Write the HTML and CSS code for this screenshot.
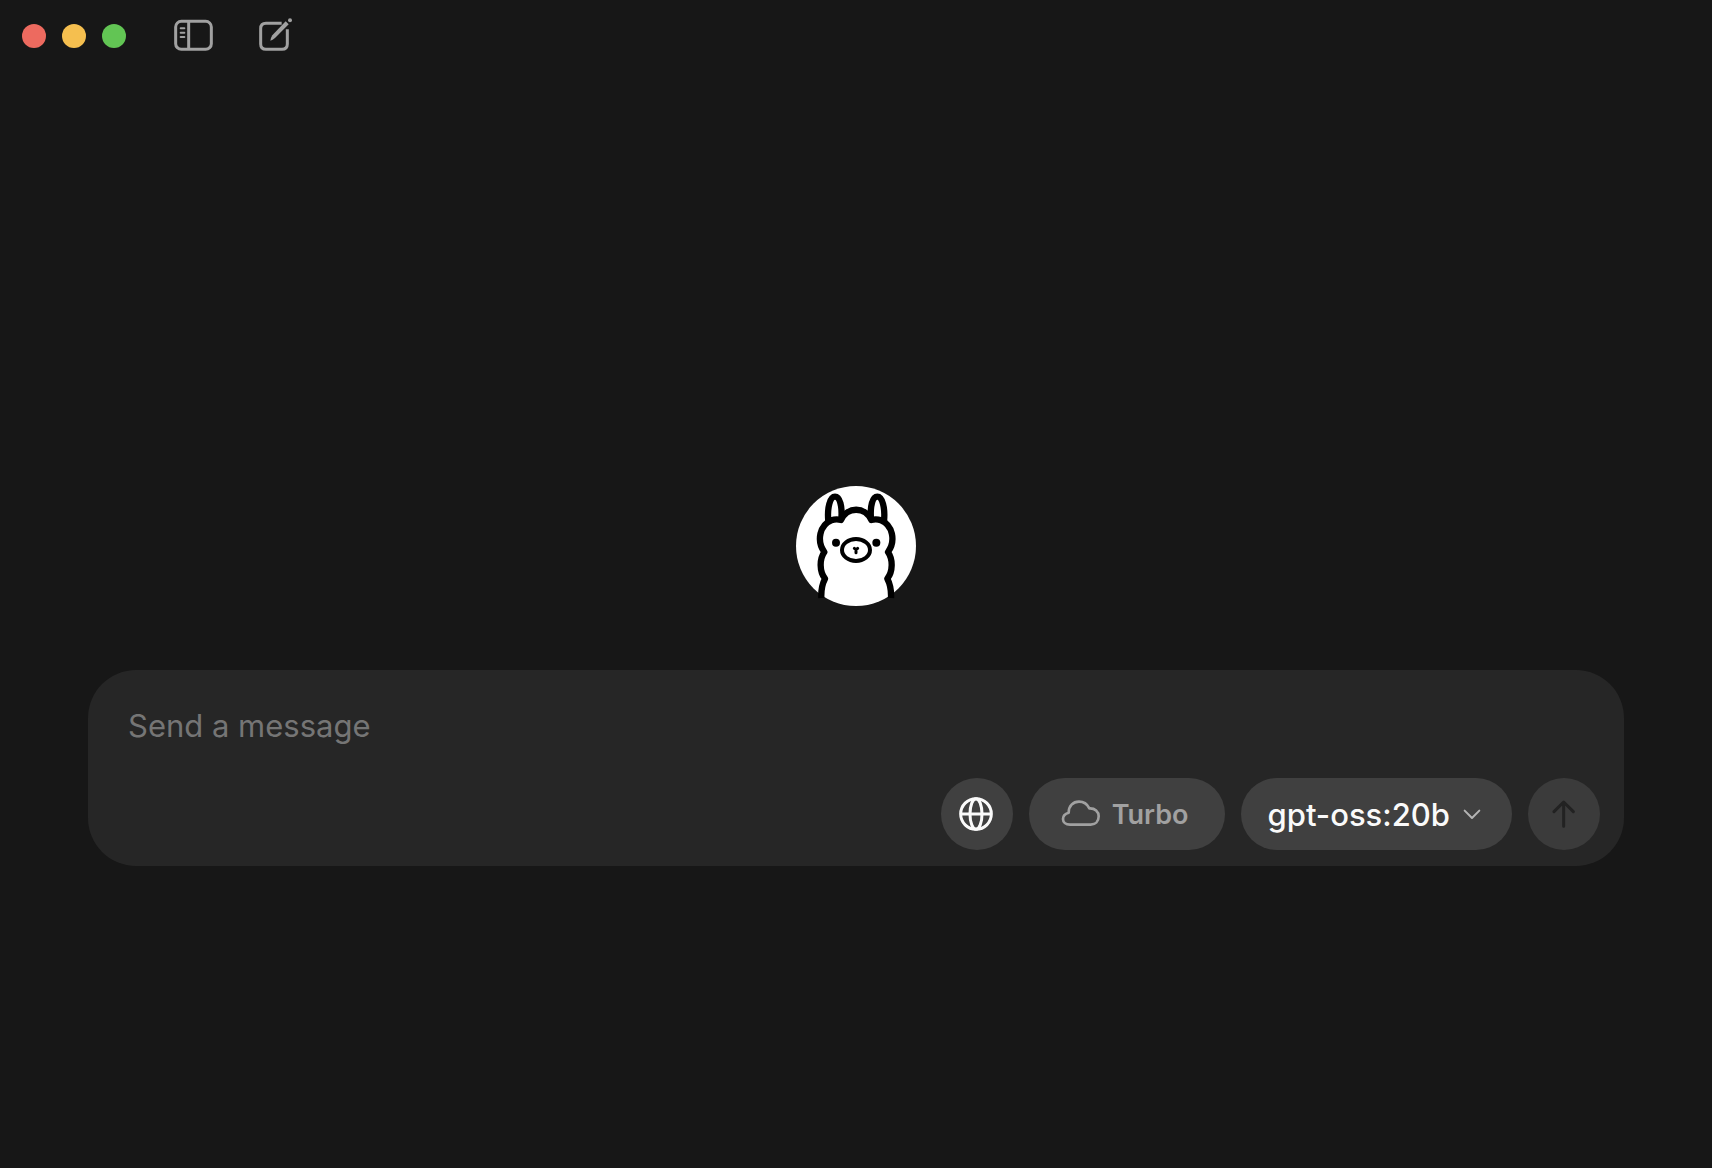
FILE: index.html
```html
<!DOCTYPE html>
<html lang="en">
<head>
<meta charset="utf-8">
<meta name="viewport" content="width=device-width, initial-scale=1">
<title>Ollama</title>
<link rel="stylesheet" href="styles.css">
</head>
<body>
<div class="app">
  <header class="titlebar">
    <div class="window-controls">
      <button class="light light-close" type="button" aria-label="Close"></button>
      <button class="light light-minimize" type="button" aria-label="Minimize"></button>
      <button class="light light-zoom" type="button" aria-label="Zoom"></button>
    </div>
    <nav class="tools" aria-label="Window tools">
      <button class="tool" type="button" aria-label="Toggle sidebar">
        <svg width="40" height="40" viewBox="0 0 120 120" fill="none" stroke="currentColor" stroke-width="9" stroke-linecap="round">
          <rect x="5" y="16" width="107" height="84" rx="17"/>
          <path d="M44 16V100" stroke-linecap="butt"/>
          <path d="M20 37H31M20 50H31M20 63H31" stroke-width="6"/>
        </svg>
      </button>
      <button class="tool" type="button" aria-label="New chat">
        <svg width="40" height="40" viewBox="0 0 120 120" fill="none" stroke="currentColor" stroke-width="9">
          <path d="M71 22H24Q8 22 8 38V84Q8 100 24 100H72Q88 100 88 84V40"/>
          <path d="M83 16L92 25L51 66Q44 72 37 74Q38 66 43 58Z" fill="currentColor" stroke="none"/>
          <circle cx="96" cy="13" r="6" fill="currentColor" stroke="none"/>
        </svg>
      </button>
    </nav>
  </header>
  <main class="chat">
    <svg class="logo" viewBox="30 30 360 360" role="img" aria-label="Ollama">
      <circle cx="210" cy="210" r="180" fill="#fff"/>
      <g fill="none" stroke="#000" stroke-width="19" stroke-linejoin="round">
        <path d="M127 136C123 96 132 62 147 62C162 62 169 92 166 128"/>
        <path d="M294 136C298 96 289 62 274 62C259 62 252 92 255 128"/>
        <path d="M106 366C105 342 109 323 117 308C100 286 100 250 115 228C91 195 101 147 136 133Q150 128 165 132C183 91 238 91 256 132Q271 128 285 133C320 147 330 195 306 228C321 250 321 286 304 308C312 323 316 342 315 366"/>
        <ellipse cx="210" cy="222" rx="42" ry="33" stroke-width="12"/>
        <path d="M205 217L210 221L215 217M210 221V230" stroke-width="9" stroke-linecap="round"/>
      </g>
      <circle cx="150" cy="200" r="12"/>
      <circle cx="271" cy="200" r="12"/>
    </svg>
    <form class="composer">
      <textarea class="message" rows="1" placeholder="Send a message" aria-label="Message"></textarea>
      <div class="actions">
        <button class="pill round" type="button" aria-label="Web search">
          <svg width="36" height="36" viewBox="0 0 108 108" fill="none" stroke="currentColor" stroke-width="9">
            <circle cx="51" cy="54" r="46"/>
            <ellipse cx="51" cy="54" rx="18" ry="46"/>
            <path d="M4 54H98"/>
          </svg>
        </button>
        <button class="pill turbo" type="button">
          <svg width="40" height="28" viewBox="0 0 120 84" fill="none" stroke="currentColor" stroke-width="8" stroke-linejoin="round">
            <path d="M27 74C14 74 6 67 6 57C6 47 12 41 23 38C23 18 36 5 54 5C69 5 79 13 85 25C102 24 113 35 113 49C113 64 103 74 89 74Z"/>
          </svg>
          <span>Turbo</span>
        </button>
        <button class="pill model" type="button" aria-haspopup="listbox">
          <span>gpt-oss:20b</span>
          <svg width="18" height="12" viewBox="0 0 54 36" fill="none" stroke="#b4b4b4" stroke-width="6" stroke-linecap="round" stroke-linejoin="round">
            <path d="M5 8L27 30L49 8"/>
          </svg>
        </button>
        <button class="pill round send" type="submit" aria-label="Send" disabled>
          <svg width="24" height="30" viewBox="0 0 72 90" fill="none" stroke="currentColor" stroke-width="9" stroke-linecap="round" stroke-linejoin="round">
            <path d="M35 82V9M6 38L35 9L64 38"/>
          </svg>
        </button>
      </div>
    </form>
  </main>
</div>
</body>
</html>
```
FILE: styles.css
```css
* {
  box-sizing: border-box;
}

body {
  margin: 0;
  background: #171717;
  color: #fafafa;
  font-family: Inter, "Liberation Sans", sans-serif;
}

button {
  display: flex;
  align-items: center;
  justify-content: center;
  padding: 0;
  border: 0;
  background: none;
  color: inherit;
  font: inherit;
}

.app {
  display: flex;
  flex-direction: column;
  min-height: 100vh;
}

.titlebar {
  display: flex;
  align-items: center;
  gap: 48px;
  height: 72px;
  padding: 0 22px;
}

.window-controls {
  display: flex;
  gap: 16px;
}

.light {
  width: 24px;
  height: 24px;
  border-radius: 50%;
}

.light-close {
  background: #ed6a5f;
}

.light-minimize {
  background: #f5bf4f;
}

.light-zoom {
  background: #62c554;
}

.tools {
  display: flex;
  gap: 44px;
  color: #a1a1a1;
}

.chat {
  display: flex;
  flex: 1;
  flex-direction: column;
  align-items: center;
  justify-content: center;
  gap: 64px;
  padding: 112px 88px 0;
}

.logo {
  width: 120px;
  height: 120px;
  overflow: visible;
}

.composer {
  display: flex;
  flex-direction: column;
  gap: 28px;
  width: 100%;
  padding: 32px 24px 16px 40px;
  border-radius: 48px;
  background: #262626;
}

.message {
  height: 48px;
  padding: 0;
  border: 0;
  outline: 0;
  background: none;
  color: inherit;
  font: 400 31px/48px Inter, "Liberation Sans", sans-serif;
  resize: none;
  overflow: hidden;
}

.message::placeholder {
  color: #757575;
  opacity: 1;
}

.actions {
  display: flex;
  justify-content: flex-end;
  gap: 16px;
}

.pill {
  height: 72px;
  border-radius: 36px;
  background: #404040;
}

.round {
  width: 72px;
}

.turbo {
  gap: 11px;
  padding: 0 36px 0 32px;
  color: #a1a1a1;
  font-size: 27px;
  font-weight: 600;
}

.model {
  gap: 13px;
  padding: 0 31px 0 27px;
  font-size: 31px;
  font-weight: 500;
}

.send {
  background: #3b3b3b;
  color: #222;
}
```
